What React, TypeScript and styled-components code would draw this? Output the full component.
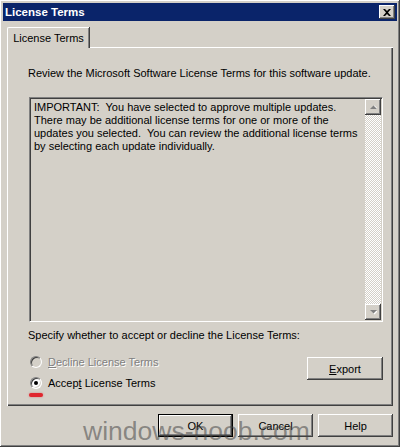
import React from 'react'
import styled, { createGlobalStyle } from 'styled-components'

const GlobalStyle = createGlobalStyle`
  html, body {
    margin: 0;
    padding: 0;
    background: #d4d0c8;
  }
  body {
    font-family: 'Liberation Sans', Arial, sans-serif;
    font-size: 11px;
    color: #000;
  }
`

const raised = `
  box-shadow:
    inset -1px -1px #404040,
    inset 1px 1px #ffffff,
    inset -2px -2px #808080,
    inset 2px 2px #d4d0c8;
`

const Window = styled.div`
  position: relative;
  box-sizing: border-box;
  width: 400px;
  height: 447px;
  padding: 3px;
  display: flex;
  flex-direction: column;
  background: #d4d0c8;
  overflow: hidden;
  ${raised}
`

const TitleBar = styled.div`
  height: 18px;
  display: flex;
  align-items: center;
  justify-content: space-between;
  padding: 0 2px 0 2px;
  background: #0a246a;
`

const Title = styled.span`
  color: #fff;
  font-weight: bold;
  font-size: 11.5px;
`

const CloseButton = styled.div`
  width: 16px;
  height: 14px;
  display: flex;
  align-items: center;
  justify-content: center;
  background: #d4d0c8;
  ${raised}
`

const Body = styled.div`
  flex: 1;
  display: flex;
  flex-direction: column;
  padding: 6px 4px 7px 4px;
`

const TabStrip = styled.div`
  display: flex;
  height: 21px;
`

const Tab = styled.div`
  box-sizing: border-box;
  width: 82px;
  height: 21px;
  display: flex;
  align-items: center;
  justify-content: center;
  padding-bottom: 1px;
  border-top: 1px solid #fff;
  border-left: 1px solid #fff;
  border-top-left-radius: 2px;
  box-shadow: inset -1px 0 #808080, 1px 0 #404040;
  margin-right: 1px;
`

const TabFiller = styled.div`
  flex: 1;
  border-bottom: 1px solid #fff;
`

const Panel = styled.div`
  flex: 1;
  display: flex;
  flex-direction: column;
  padding: 19px 10px 0 21px;
  border-left: 1px solid #fff;
  box-shadow: inset -1px -1px #404040, inset -2px -2px #808080;
`

const Line = styled.div`
  height: 13px;
  line-height: 13px;
  white-space: nowrap;
  margin-left: -1px;
`

const TextBox = styled.div`
  margin-top: 17px;
  height: 225px;
  box-sizing: border-box;
  display: flex;
  border-style: solid;
  border-width: 1px;
  border-color: #808080 #fff #fff #808080;
  box-shadow: inset 1px 1px #404040, inset -1px -1px #d4d0c8;
  padding: 1px;
`

const TextArea = styled.div`
  flex: 1;
  padding: 2px 3px;
  line-height: 13px;
  white-space: pre;
`

const ScrollBar = styled.div`
  width: 16px;
  display: flex;
  flex-direction: column;
  justify-content: space-between;
  background: repeating-conic-gradient(#d4d0c8 0 25%, #ffffff 0 50%) 0 0 / 2px 2px;
`

const ScrollButton = styled.div`
  width: 16px;
  height: 16px;
  display: flex;
  align-items: center;
  justify-content: center;
  background: #d4d0c8;
  ${raised}
`

const Options = styled.div`
  margin-top: 13px;
  display: flex;
  justify-content: space-between;
  align-items: flex-start;
`

const RadioColumn = styled.div`
  display: flex;
  flex-direction: column;
  gap: 8px;
`

const RadioRow = styled.label<{ $disabled?: boolean }>`
  position: relative;
  display: flex;
  align-items: center;
  gap: 6px;
  height: 13px;
  padding-left: 1px;
  color: ${(p) => (p.$disabled ? '#808080' : '#000')};
  text-shadow: ${(p) => (p.$disabled ? '1px 1px #fff' : 'none')};
`

const Radio = styled.span<{ $checked?: boolean; $disabled?: boolean }>`
  position: relative;
  box-sizing: border-box;
  width: 12px;
  height: 12px;
  border-radius: 50%;
  border: 1px solid;
  border-color: #808080 #fff #fff #808080;
  box-shadow: inset 1px 1px #404040, inset -1px -1px #d4d0c8;
  background: ${(p) => (p.$disabled ? '#d4d0c8' : '#fff')};
  &::after {
    content: '';
    display: ${(p) => (p.$checked ? 'block' : 'none')};
    position: absolute;
    left: 3px;
    top: 3px;
    width: 4px;
    height: 4px;
    border-radius: 50%;
    background: #000;
  }
`

const Mark = styled.span`
  position: absolute;
  left: 0;
  top: 17px;
  width: 14px;
  height: 4px;
  border-radius: 2px;
  background: #e0262e;
  box-shadow: 0 0 2px rgba(224, 38, 46, 0.5);
`

const Button = styled.div<{ $default?: boolean }>`
  box-sizing: border-box;
  width: 75px;
  height: 23px;
  display: flex;
  align-items: center;
  justify-content: center;
  background: #d4d0c8;
  border: 1px solid ${(p) => (p.$default ? '#000' : 'transparent')};
  ${raised}
  ${(p) => (p.$default ? '' : 'border: none;')}
`

const ExportButton = styled(Button)`
  width: 76px;
  margin-top: 2px;
`

const ButtonRow = styled.div`
  margin-top: 8px;
  display: flex;
  justify-content: flex-end;
  gap: 5px;
`

const Watermark = styled.div`
  position: absolute;
  left: 83px;
  top: 418px;
  font-size: 26.5px;
  line-height: 26.5px;
  color: rgba(70, 70, 70, 0.55);
  pointer-events: none;
  white-space: nowrap;
`

const Arrow = ({ down }: { down?: boolean }) => (
  <svg width="7" height="5" viewBox="0 0 7 5">
    <path d={down ? 'M1 1h7L4.5 4.5z' : 'M1 4h7L4.5 0.5z'} fill="#fff" />
    <path d={down ? 'M0 0h7L3.5 3.5z' : 'M0 4h7L3.5 0.5z'} fill="#808080" />
  </svg>
)

const CloseIcon = () => (
  <svg width="8" height="7" viewBox="0 0 8 7">
    <path d="M0 0h2l2 2 2-2h2L5 3.5 8 7H6L4 5 2 7H0l3-3.5z" fill="#000" />
  </svg>
)

export default function App() {
  return (
    <>
      <GlobalStyle />
      <Window>
        <TitleBar>
          <Title>License Terms</Title>
          <CloseButton>
            <CloseIcon />
          </CloseButton>
        </TitleBar>
        <Body>
          <TabStrip>
            <Tab>License Terms</Tab>
            <TabFiller />
          </TabStrip>
          <Panel>
            <Line>Review the Microsoft Software License Terms for this software update.</Line>
            <TextBox>
              <TextArea>
                {'IMPORTANT:  You have selected to approve multiple updates.\n' +
                  'There may be additional license terms for one or more of the\n' +
                  'updates you selected.  You can review the additional license terms\n' +
                  'by selecting each update individually.'}
              </TextArea>
              <ScrollBar>
                <ScrollButton>
                  <Arrow />
                </ScrollButton>
                <ScrollButton>
                  <Arrow down />
                </ScrollButton>
              </ScrollBar>
            </TextBox>
            <Line style={{ marginTop: 7 }}>Specify whether to accept or decline the License Terms:</Line>
            <Options>
              <RadioColumn>
                <RadioRow $disabled>
                  <Radio $disabled />
                  <span>
                    <u>D</u>ecline License Terms
                  </span>
                </RadioRow>
                <RadioRow>
                  <Radio $checked />
                  <span>
                    Accep<u>t</u> License Terms
                  </span>
                  <Mark />
                </RadioRow>
              </RadioColumn>
              <ExportButton>
                <span>
                  <u>E</u>xport
                </span>
              </ExportButton>
            </Options>
          </Panel>
          <ButtonRow>
            <Button $default>OK</Button>
            <Button>Cancel</Button>
            <Button>Help</Button>
          </ButtonRow>
        </Body>
        <Watermark>windows-noob.com</Watermark>
      </Window>
    </>
  )
}
